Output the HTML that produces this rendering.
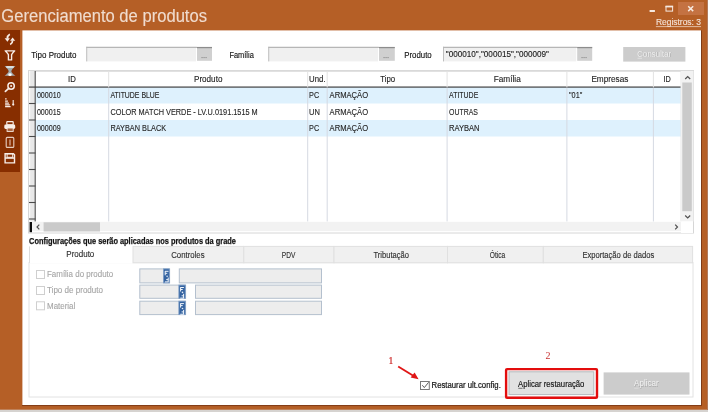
<!DOCTYPE html>
<html><head><meta charset="utf-8"><title>Gerenciamento de produtos</title>
<style>html,body{margin:0;padding:0;width:708px;height:412px;overflow:hidden;background:#B55F28;}
svg{display:block;font-family:"Liberation Sans",sans-serif;}</style></head>
<body><svg width="708" height="412" viewBox="0 0 708 412">
<defs><filter id="bl" x="0" y="0" width="708" height="412" filterUnits="userSpaceOnUse"><feGaussianBlur stdDeviation="0.45"/></filter></defs>
<g filter="url(#bl)">
<rect x="0" y="0" width="708" height="412" fill="#B55F28" />
<rect x="0" y="409.7" width="708" height="2.3" fill="#D6D3D0" />
<rect x="707" y="0" width="1" height="410" fill="#B07A5C" />
<text x="1.3" y="21.5" font-size="18.8" font-weight="normal" fill="#F0DCCE" stroke="#F0DCCE" stroke-width="0.12" textLength="205.7" lengthAdjust="spacingAndGlyphs" >Gerenciamento de produtos</text>
<rect x="678" y="2" width="26" height="13" fill="#C47242" />
<rect x="649.6" y="10" width="5.3" height="2" fill="#F6E9E0" />
<rect x="666" y="6.3" width="6.6" height="4.8" fill="none" stroke="#F6E9E0" stroke-width="1"/>
<rect x="665.5" y="5.8" width="7.6" height="1.6" fill="#F6E9E0" />
<path d="M688.2 6.2 L693.2 11.1 M693.2 6.2 L688.2 11.1" stroke="#F6E9E0" stroke-width="1.5"/>
<text x="655.9" y="25.2" font-size="8.2" font-weight="normal" fill="#F3E2D6" stroke="#F3E2D6" stroke-width="0.12" textLength="45.1" lengthAdjust="spacingAndGlyphs" >Registros: 3</text>
<line x1="655.9" y1="26.6" x2="701" y2="26.6" stroke="#F3E2D6" stroke-width="0.7"/>
<rect x="0" y="30" width="20" height="142" fill="#872F05" />
<rect x="22.4" y="30.4" width="678.6" height="374.7" fill="#FFFFFF" />
<line x1="701.5" y1="30.4" x2="701.5" y2="405.6" stroke="#7E3A16" stroke-width="1"/>
<line x1="22" y1="405.6" x2="702" y2="405.6" stroke="#7E3A16" stroke-width="1"/>
<text x="31.3" y="57.5" font-size="8.7" font-weight="normal" fill="#141414" stroke="#141414" stroke-width="0.15" textLength="45.2" lengthAdjust="spacingAndGlyphs" >Tipo Produto</text>
<rect x="86.3" y="46.8" width="109.7" height="14.600000000000001" fill="#F0F0F0" />
<rect x="197" y="46.8" width="15" height="14.000000000000002" fill="#D0D0D0" />
<rect x="86.3" y="46.8" width="110.7" height="1.1" fill="#B0B0B0" />
<rect x="197" y="47.0" width="15" height="1.2" fill="#8C8C8C" />
<rect x="86.3" y="46.8" width="0.9" height="14.600000000000001" fill="#B8B8B8" />
<rect x="201.5" y="57.0" width="1.1" height="1.1" fill="#8A8A8A" />
<rect x="203.5" y="57.0" width="1.1" height="1.1" fill="#8A8A8A" />
<rect x="205.5" y="57.0" width="1.1" height="1.1" fill="#8A8A8A" />
<text x="229.4" y="57.5" font-size="8.7" font-weight="normal" fill="#141414" stroke="#141414" stroke-width="0.15" textLength="24.4" lengthAdjust="spacingAndGlyphs" >Família</text>
<rect x="268.3" y="46.8" width="109.69999999999999" height="14.600000000000001" fill="#F0F0F0" />
<rect x="379" y="46.8" width="15.800000000000011" height="14.000000000000002" fill="#D0D0D0" />
<rect x="268.3" y="46.8" width="110.69999999999999" height="1.1" fill="#B0B0B0" />
<rect x="379" y="47.0" width="15.800000000000011" height="1.2" fill="#8C8C8C" />
<rect x="268.3" y="46.8" width="0.9" height="14.600000000000001" fill="#B8B8B8" />
<rect x="383.5" y="57.0" width="1.1" height="1.1" fill="#8A8A8A" />
<rect x="385.5" y="57.0" width="1.1" height="1.1" fill="#8A8A8A" />
<rect x="387.5" y="57.0" width="1.1" height="1.1" fill="#8A8A8A" />
<text x="404.3" y="57.5" font-size="8.7" font-weight="normal" fill="#141414" stroke="#141414" stroke-width="0.15" textLength="27.4" lengthAdjust="spacingAndGlyphs" >Produto</text>
<rect x="443" y="46.8" width="133.20000000000005" height="14.600000000000001" fill="#F0F0F0" />
<rect x="577.2" y="46.8" width="15.0" height="14.000000000000002" fill="#D0D0D0" />
<rect x="443" y="46.8" width="134.20000000000005" height="1.1" fill="#B0B0B0" />
<rect x="577.2" y="47.0" width="15.0" height="1.2" fill="#8C8C8C" />
<rect x="443" y="46.8" width="0.9" height="14.600000000000001" fill="#B8B8B8" />
<rect x="581.5" y="57.0" width="1.1" height="1.1" fill="#8A8A8A" />
<rect x="583.5" y="57.0" width="1.1" height="1.1" fill="#8A8A8A" />
<rect x="585.5" y="57.0" width="1.1" height="1.1" fill="#8A8A8A" />
<text x="445.8" y="57.0" font-size="8.6" font-weight="normal" fill="#1A1A1A" stroke="#1A1A1A" stroke-width="0.12" textLength="103.2" lengthAdjust="spacingAndGlyphs" >&quot;000010&quot;,&quot;000015&quot;,&quot;000009&quot;</text>
<rect x="623.2" y="47" width="62.2" height="14.6" fill="#CCCCCC" />
<text x="637.8" y="57.1" font-size="8.4" font-weight="normal" fill="#A8A8A8" textLength="34.0" lengthAdjust="spacingAndGlyphs" >Consultar</text>
<text x="637.3" y="56.6" font-size="8.4" font-weight="normal" fill="#F2F2F2" textLength="34.0" lengthAdjust="spacingAndGlyphs" >Consultar</text>
<line x1="637.5" y1="58.3" x2="642" y2="58.3" stroke="#EDEDED" stroke-width="0.6"/>
<rect x="28.5" y="70.5" width="665.0" height="162.5" fill="#FFFFFF" stroke="#D6D6D6" stroke-width="1" />
<rect x="28.2" y="70.1" width="665.5" height="1.7" fill="#DADADA" />
<rect x="35.5" y="87.0" width="645.5" height="16.5" fill="#DEF1FD" />
<rect x="35.5" y="120.0" width="645.5" height="16.5" fill="#DEF1FD" />
<rect x="29" y="71" width="6" height="150.5" fill="#E8E8E8" />
<rect x="29" y="71" width="1.2" height="150.5" fill="#F8F8F8" />
<line x1="35.2" y1="71" x2="35.2" y2="221.5" stroke="#4A4A4A" stroke-width="1.1"/>
<rect x="29" y="86.5" width="652" height="1.15" fill="#3A3A3A" />
<line x1="29" y1="103.5" x2="35.5" y2="103.5" stroke="#4A4A4A" stroke-width="1.1"/>
<line x1="29" y1="120.0" x2="35.5" y2="120.0" stroke="#4A4A4A" stroke-width="1.1"/>
<line x1="29" y1="136.5" x2="35.5" y2="136.5" stroke="#4A4A4A" stroke-width="1.1"/>
<line x1="29" y1="153.0" x2="35.5" y2="153.0" stroke="#4A4A4A" stroke-width="1.1"/>
<line x1="29" y1="169.5" x2="35.5" y2="169.5" stroke="#4A4A4A" stroke-width="1.1"/>
<line x1="29" y1="186.0" x2="35.5" y2="186.0" stroke="#4A4A4A" stroke-width="1.1"/>
<line x1="29" y1="202.5" x2="35.5" y2="202.5" stroke="#4A4A4A" stroke-width="1.1"/>
<line x1="29" y1="219.0" x2="35.5" y2="219.0" stroke="#4A4A4A" stroke-width="1.1"/>
<line x1="108.7" y1="71" x2="108.7" y2="87" stroke="#E2E2E2" stroke-width="1"/>
<line x1="108.7" y1="87.5" x2="108.7" y2="221.5" stroke="#D5D9E2" stroke-width="1"/>
<line x1="307.7" y1="71" x2="307.7" y2="87" stroke="#E2E2E2" stroke-width="1"/>
<line x1="307.7" y1="87.5" x2="307.7" y2="221.5" stroke="#D5D9E2" stroke-width="1"/>
<line x1="327.2" y1="71" x2="327.2" y2="87" stroke="#E2E2E2" stroke-width="1"/>
<line x1="327.2" y1="87.5" x2="327.2" y2="221.5" stroke="#D5D9E2" stroke-width="1"/>
<line x1="447.1" y1="71" x2="447.1" y2="87" stroke="#E2E2E2" stroke-width="1"/>
<line x1="447.1" y1="87.5" x2="447.1" y2="221.5" stroke="#D5D9E2" stroke-width="1"/>
<line x1="566.9" y1="71" x2="566.9" y2="87" stroke="#E2E2E2" stroke-width="1"/>
<line x1="566.9" y1="87.5" x2="566.9" y2="221.5" stroke="#D5D9E2" stroke-width="1"/>
<line x1="653.4" y1="71" x2="653.4" y2="87" stroke="#E2E2E2" stroke-width="1"/>
<line x1="653.4" y1="87.5" x2="653.4" y2="221.5" stroke="#D5D9E2" stroke-width="1"/>
<line x1="681" y1="71" x2="681" y2="221.5" stroke="#E6E6E6" stroke-width="1"/>
<text x="68" y="81.6" font-size="8.4" font-weight="normal" fill="#1E1E1E" stroke="#1E1E1E" stroke-width="0.12" textLength="7.8" lengthAdjust="spacingAndGlyphs" >ID</text>
<text x="194" y="81.6" font-size="8.4" font-weight="normal" fill="#1E1E1E" stroke="#1E1E1E" stroke-width="0.12" textLength="28.4" lengthAdjust="spacingAndGlyphs" >Produto</text>
<text x="309.1" y="81.6" font-size="8.4" font-weight="normal" fill="#1E1E1E" stroke="#1E1E1E" stroke-width="0.12" textLength="16.5" lengthAdjust="spacingAndGlyphs" >Und.</text>
<text x="380.2" y="81.6" font-size="8.4" font-weight="normal" fill="#1E1E1E" stroke="#1E1E1E" stroke-width="0.12" textLength="14.9" lengthAdjust="spacingAndGlyphs" >Tipo</text>
<text x="493.7" y="81.6" font-size="8.4" font-weight="normal" fill="#1E1E1E" stroke="#1E1E1E" stroke-width="0.12" textLength="27.1" lengthAdjust="spacingAndGlyphs" >Família</text>
<text x="591.4" y="81.6" font-size="8.4" font-weight="normal" fill="#1E1E1E" stroke="#1E1E1E" stroke-width="0.12" textLength="37.0" lengthAdjust="spacingAndGlyphs" >Empresas</text>
<text x="663.4" y="81.6" font-size="8.4" font-weight="normal" fill="#1E1E1E" stroke="#1E1E1E" stroke-width="0.12" textLength="7.3" lengthAdjust="spacingAndGlyphs" >ID</text>
<text x="36.9" y="98.1" font-size="8.7" font-weight="normal" fill="#262626" stroke="#262626" stroke-width="0.12" textLength="23.7" lengthAdjust="spacingAndGlyphs" >000010</text>
<text x="110.4" y="98.1" font-size="8.7" font-weight="normal" fill="#262626" stroke="#262626" stroke-width="0.12" textLength="49.1" lengthAdjust="spacingAndGlyphs" >ATITUDE BLUE</text>
<text x="309.1" y="98.1" font-size="8.7" font-weight="normal" fill="#262626" stroke="#262626" stroke-width="0.12" textLength="10.1" lengthAdjust="spacingAndGlyphs" >PC</text>
<text x="329.6" y="98.1" font-size="8.7" font-weight="normal" fill="#262626" stroke="#262626" stroke-width="0.12" textLength="38.5" lengthAdjust="spacingAndGlyphs" >ARMAÇÃO</text>
<text x="449" y="98.1" font-size="8.7" font-weight="normal" fill="#262626" stroke="#262626" stroke-width="0.12" textLength="29.3" lengthAdjust="spacingAndGlyphs" >ATITUDE</text>
<text x="569" y="98.1" font-size="8.7" font-weight="normal" fill="#262626" stroke="#262626" stroke-width="0.12" textLength="13.3" lengthAdjust="spacingAndGlyphs" >&quot;01&quot;</text>
<text x="36.9" y="114.6" font-size="8.7" font-weight="normal" fill="#262626" stroke="#262626" stroke-width="0.12" textLength="23.7" lengthAdjust="spacingAndGlyphs" >000015</text>
<text x="110.4" y="114.6" font-size="8.7" font-weight="normal" fill="#262626" stroke="#262626" stroke-width="0.12" textLength="147.3" lengthAdjust="spacingAndGlyphs" >COLOR MATCH VERDE - LV.U.0191.1515 M</text>
<text x="309.1" y="114.6" font-size="8.7" font-weight="normal" fill="#262626" stroke="#262626" stroke-width="0.12" textLength="10.9" lengthAdjust="spacingAndGlyphs" >UN</text>
<text x="329.6" y="114.6" font-size="8.7" font-weight="normal" fill="#262626" stroke="#262626" stroke-width="0.12" textLength="38.5" lengthAdjust="spacingAndGlyphs" >ARMAÇÃO</text>
<text x="449" y="114.6" font-size="8.7" font-weight="normal" fill="#262626" stroke="#262626" stroke-width="0.12" textLength="28.9" lengthAdjust="spacingAndGlyphs" >OUTRAS</text>
<text x="36.9" y="131.1" font-size="8.7" font-weight="normal" fill="#262626" stroke="#262626" stroke-width="0.12" textLength="23.7" lengthAdjust="spacingAndGlyphs" >000009</text>
<text x="110.4" y="131.1" font-size="8.7" font-weight="normal" fill="#262626" stroke="#262626" stroke-width="0.12" textLength="55.7" lengthAdjust="spacingAndGlyphs" >RAYBAN BLACK</text>
<text x="309.1" y="131.1" font-size="8.7" font-weight="normal" fill="#262626" stroke="#262626" stroke-width="0.12" textLength="10.1" lengthAdjust="spacingAndGlyphs" >PC</text>
<text x="329.6" y="131.1" font-size="8.7" font-weight="normal" fill="#262626" stroke="#262626" stroke-width="0.12" textLength="38.5" lengthAdjust="spacingAndGlyphs" >ARMAÇÃO</text>
<text x="449" y="131.1" font-size="8.7" font-weight="normal" fill="#262626" stroke="#262626" stroke-width="0.12" textLength="30.5" lengthAdjust="spacingAndGlyphs" >RAYBAN</text>
<rect x="681" y="71" width="12.5" height="150.5" fill="#F2F2F2" />
<rect x="682.3" y="82.5" width="9.5" height="128.7" fill="#CACACA" />
<path d="M685.2 79 L687.7 76.5 L690.2 79" fill="none" stroke="#505050" stroke-width="1.2"/>
<path d="M685.2 215.5 L687.7 218 L690.2 215.5" fill="none" stroke="#505050" stroke-width="1.2"/>
<rect x="29" y="221.8" width="652" height="9.3" fill="#F2F2F2" />
<rect x="43.6" y="222.3" width="56.4" height="9.2" fill="#CACACA" />
<rect x="29.6" y="222" width="2.4" height="10.2" fill="#111111" />
<path d="M39.3 224.6 L37 227 L39.3 229.4" fill="none" stroke="#505050" stroke-width="1.2"/>
<path d="M675.2 224.6 L677.5 227 L675.2 229.4" fill="none" stroke="#505050" stroke-width="1.2"/>
<rect x="681" y="221.5" width="12" height="11.5" fill="#FFFFFF" />
<text x="29.1" y="243.9" font-size="8.6" font-weight="bold" fill="#141414" stroke="#141414" stroke-width="0.25" textLength="206.8" lengthAdjust="spacingAndGlyphs" >Configurações que serão aplicadas nos produtos da grade</text>
<rect x="29" y="262.6" width="664" height="134.4" fill="#FFFFFF" stroke="#E2E2E2" stroke-width="1" />
<rect x="29" y="246.4" width="104" height="16.6" fill="#FFFFFF" />
<line x1="29.5" y1="246.4" x2="29.5" y2="263" stroke="#DCDCDC" stroke-width="1"/>
<text x="66.3" y="256.5" font-size="8.3" font-weight="normal" fill="#2E2E2E" stroke="#2E2E2E" stroke-width="0.12" textLength="28.0" lengthAdjust="spacingAndGlyphs" >Produto</text>
<rect x="133" y="246.4" width="110.80000000000001" height="16.4" fill="#F0F0F0" stroke="#E0E0E0" stroke-width="1" />
<text x="171.2" y="257.7" font-size="8.3" font-weight="normal" fill="#2E2E2E" stroke="#2E2E2E" stroke-width="0.12" textLength="33.4" lengthAdjust="spacingAndGlyphs" >Controles</text>
<rect x="243.8" y="246.4" width="90.19999999999999" height="16.4" fill="#F0F0F0" stroke="#E0E0E0" stroke-width="1" />
<text x="281.8" y="257.7" font-size="8.3" font-weight="normal" fill="#2E2E2E" stroke="#2E2E2E" stroke-width="0.12" textLength="13.5" lengthAdjust="spacingAndGlyphs" >PDV</text>
<rect x="334" y="246.4" width="113.5" height="16.4" fill="#F0F0F0" stroke="#E0E0E0" stroke-width="1" />
<text x="373.5" y="257.7" font-size="8.3" font-weight="normal" fill="#2E2E2E" stroke="#2E2E2E" stroke-width="0.12" textLength="35.5" lengthAdjust="spacingAndGlyphs" >Tributação</text>
<rect x="447.5" y="246.4" width="95.79999999999995" height="16.4" fill="#F0F0F0" stroke="#E0E0E0" stroke-width="1" />
<text x="489.8" y="257.7" font-size="8.3" font-weight="normal" fill="#2E2E2E" stroke="#2E2E2E" stroke-width="0.12" textLength="15.5" lengthAdjust="spacingAndGlyphs" >Ótica</text>
<rect x="543.3" y="246.4" width="149.30000000000007" height="16.4" fill="#F0F0F0" stroke="#E0E0E0" stroke-width="1" />
<text x="582.4" y="257.7" font-size="8.3" font-weight="normal" fill="#2E2E2E" stroke="#2E2E2E" stroke-width="0.12" textLength="71.8" lengthAdjust="spacingAndGlyphs" >Exportação de dados</text>
<rect x="36.5" y="270.5" width="8" height="8" fill="#FFFFFF" stroke="#CFCFCF" stroke-width="1" />
<text x="47" y="277.3" font-size="8.3" font-weight="normal" fill="#A6A6A6" stroke="#A6A6A6" stroke-width="0.12" textLength="66.2" lengthAdjust="spacingAndGlyphs" >Família do produto</text>
<rect x="36.5" y="286.5" width="8" height="8" fill="#FFFFFF" stroke="#CFCFCF" stroke-width="1" />
<text x="47" y="293.1" font-size="8.3" font-weight="normal" fill="#A6A6A6" stroke="#A6A6A6" stroke-width="0.12" textLength="56" lengthAdjust="spacingAndGlyphs" >Tipo de produto</text>
<rect x="36.5" y="301.8" width="8" height="8" fill="#FFFFFF" stroke="#CFCFCF" stroke-width="1" />
<text x="47" y="308.7" font-size="8.3" font-weight="normal" fill="#A6A6A6" stroke="#A6A6A6" stroke-width="0.12" textLength="28.3" lengthAdjust="spacingAndGlyphs" >Material</text>
<rect x="139.8" y="268.9" width="29.799999999999983" height="14.0" fill="#EDEDED" stroke="#B4C0CE" stroke-width="1" />
<rect x="179.3" y="268.9" width="142.2" height="14.0" fill="#EDEDED" stroke="#B4C0CE" stroke-width="1" />
<rect x="163.5" y="268.9" width="5.7999999999999945" height="14.0" fill="#3463A0" stroke="#7C9CC6" stroke-width="0.9" />
<path d="M164.9 271.29999999999995 H168.5 M165.20000000000002 271.29999999999995 V275.29999999999995 M165.20000000000002 273.29999999999995 H167.3 M168.20000000000002 277.59999999999997 V281.9 M164.9 281.9 H168.5 M166.20000000000002 279.59999999999997 H168.20000000000002" fill="none" stroke="#F2F6FB" stroke-width="1"/>
<circle cx="167.1" cy="276.19999999999993" r="0.8" fill="#E8EEF6"/>
<rect x="139.8" y="285.1" width="45.79999999999998" height="13.199999999999989" fill="#EDEDED" stroke="#B4C0CE" stroke-width="1" />
<rect x="195.5" y="285.1" width="126.0" height="13.199999999999989" fill="#EDEDED" stroke="#B4C0CE" stroke-width="1" />
<rect x="178.9" y="285.1" width="6.399999999999989" height="13.199999999999989" fill="#3463A0" stroke="#7C9CC6" stroke-width="0.9" />
<path d="M180.3 287.5 H183.9 M180.60000000000002 287.5 V291.5 M180.60000000000002 289.5 H182.70000000000002 M183.60000000000002 293.8 V298.1 M180.3 298.1 H183.9 M181.60000000000002 295.8 H183.60000000000002" fill="none" stroke="#F2F6FB" stroke-width="1"/>
<circle cx="182.5" cy="292.4" r="0.8" fill="#E8EEF6"/>
<rect x="139.8" y="301.2" width="45.79999999999998" height="13.400000000000034" fill="#EDEDED" stroke="#B4C0CE" stroke-width="1" />
<rect x="195.5" y="301.2" width="126.0" height="13.400000000000034" fill="#EDEDED" stroke="#B4C0CE" stroke-width="1" />
<rect x="178.9" y="301.2" width="6.399999999999989" height="13.400000000000034" fill="#3463A0" stroke="#7C9CC6" stroke-width="0.9" />
<path d="M180.3 303.59999999999997 H183.9 M180.60000000000002 303.59999999999997 V307.59999999999997 M180.60000000000002 305.59999999999997 H182.70000000000002 M183.60000000000002 309.9 V314.2 M180.3 314.2 H183.9 M181.60000000000002 311.9 H183.60000000000002" fill="none" stroke="#F2F6FB" stroke-width="1"/>
<circle cx="182.5" cy="308.49999999999994" r="0.8" fill="#E8EEF6"/>
<text x="388.6" y="363.6" font-family="Liberation Serif" font-size="9.6" fill="#CC2626" stroke="#CC2626" stroke-width="0.2">1</text>
<path d="M398.2 366.4 L414.5 376.6" stroke="#E01818" stroke-width="1.8"/>
<path d="M418.6 379.3 L410.6 377.6 L414.6 372.4 Z" fill="#E01818"/>
<rect x="420.5" y="381.5" width="8.8" height="8" fill="#FFFFFF" stroke="#7A7A7A" stroke-width="1" />
<path d="M422.3 385.2 L424.3 387.6 L428.6 382.3" fill="none" stroke="#4A4A4A" stroke-width="0.9"/>
<text x="431.6" y="388" font-size="8.4" font-weight="normal" fill="#141414" stroke="#141414" stroke-width="0.2" textLength="69.2" lengthAdjust="spacingAndGlyphs" >Restaurar ult.config.</text>
<text x="545.5" y="358.8" font-family="Liberation Serif" font-size="11" fill="#C83434" textLength="5" lengthAdjust="spacingAndGlyphs">2</text>
<rect x="506.1" y="369.1" width="90.9" height="28.7" rx="1" fill="none" stroke="#E30B0B" stroke-width="2.4"/>
<rect x="509" y="371.8" width="84.8" height="22.8" fill="#E1E1E1" stroke="#B4B8BC" stroke-width="1" />
<text x="518.1" y="386.5" font-size="8.4" font-weight="normal" fill="#141414" stroke="#141414" stroke-width="0.15" textLength="66.3" lengthAdjust="spacingAndGlyphs" >Aplicar restauração</text>
<line x1="518.3" y1="388.3" x2="522.5" y2="388.3" stroke="#222" stroke-width="0.6"/>
<rect x="603.6" y="372.4" width="85.9" height="22.2" fill="#CCCCCC" />
<text x="634.5" y="386.7" font-size="8.4" font-weight="normal" fill="#A8A8A8" textLength="24.7" lengthAdjust="spacingAndGlyphs" >Aplicar</text>
<text x="634" y="386.2" font-size="8.4" font-weight="normal" fill="#F2F2F2" textLength="24.7" lengthAdjust="spacingAndGlyphs" >Aplicar</text>
<line x1="634.2" y1="388.2" x2="638.5" y2="388.2" stroke="#E4E4E4" stroke-width="0.6"/>
<path d="M9.8 34.3 Q7.4 35.6 7.3 38.6" fill="none" stroke="#F7EDE6" stroke-width="1.7"/>
<path d="M4.7 38.2 L9.8 38.2 L7.4 41.8 Z" fill="#F7EDE6"/>
<path d="M12.6 40.4 Q12.6 43.2 10.2 44.5" fill="none" stroke="#F7EDE6" stroke-width="1.7"/>
<path d="M10.1 40.7 L15.2 40.7 L12.6 37.4 Z" fill="#F7EDE6"/>
<path d="M5.2 50.8 H14.7 Q12.5 53 11.6 54.6 V59.9 H8.4 V54.6 Q7.5 53 5.2 50.8 Z" fill="none" stroke="#F7EDE6" stroke-width="1.35" stroke-linejoin="round"/>
<path d="M4.7 66 H15.3 Q11.6 69.6 11.3 71.2 Q11.6 72.8 15.3 75.8 H4.7 Q8.4 72.8 8.7 71.2 Q8.4 69.6 4.7 66 Z" fill="#A2ACAF"/>
<rect x="6.3" y="66.2" width="7.4" height="1.6" fill="#E8ECEC"/>
<ellipse cx="10" cy="74.7" rx="1.7" ry="1.4" fill="#FFFFFF"/>
<circle cx="11.1" cy="86" r="3.2" fill="none" stroke="#F7EDE6" stroke-width="1.45"/>
<circle cx="11.1" cy="86" r="1" fill="#F7EDE6"/>
<path d="M8.7 88.4 L5.4 91.4" stroke="#F7EDE6" stroke-width="1.7" stroke-linecap="round"/>
<path d="M5.1 98.9 H6.6 M5.1 101.2 H7.9 M5.1 103.1 H8.9 M5.1 104.9 H9.8 M5.1 106.7 H10.6" stroke="#F7EDE6" stroke-width="1.3"/>
<path d="M13.2 100 V104" stroke="#F7EDE6" stroke-width="1.1"/><circle cx="13.2" cy="104.6" r="1.1" fill="#F7EDE6"/>
<rect x="6.8" y="121.6" width="6.4" height="3.2" rx="0.6" fill="none" stroke="#F7EDE6" stroke-width="1.2"/>
<rect x="4.3" y="124.6" width="10.9" height="4.4" rx="1.4" fill="#F7EDE6"/>
<rect x="7.1" y="128" width="6.1" height="3.4" fill="#A8603A" stroke="#F7EDE6" stroke-width="0.9"/>
<rect x="6.2" y="137.4" width="7.6" height="10" rx="1" fill="none" stroke="#E6CDBD" stroke-width="1.1"/>
<path d="M10 139.5 V145.5" stroke="#C9957A" stroke-width="1.6"/>
<path d="M5.1 153.7 H13.4 L14.5 154.8 V162.9 H5.1 Z" fill="none" stroke="#F7EDE6" stroke-width="1.4"/>
<rect x="7.1" y="153.7" width="5.6" height="3.6" fill="none" stroke="#F7EDE6" stroke-width="1"/>
<rect x="5.1" y="157.3" width="9.4" height="1.5" fill="#F7EDE6"/>
</g>
</svg></body></html>
